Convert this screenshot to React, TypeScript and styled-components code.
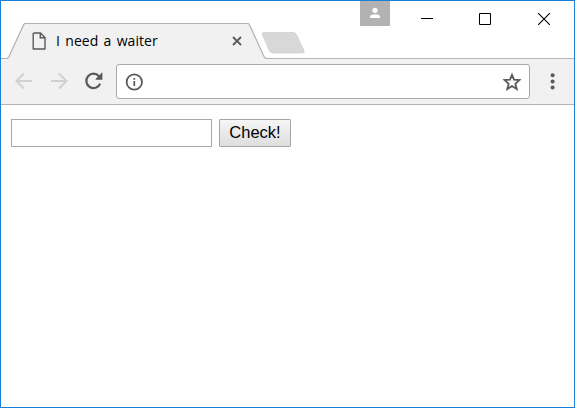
import React from "react";
import styled, { createGlobalStyle } from "styled-components";

const GlobalStyle = createGlobalStyle`
  * { box-sizing: border-box; }
  body { margin: 0; background: #fff; overflow: hidden; }
  svg { display: block; flex: none; }
`;

const Window = styled.div`
  width: 575px;
  height: 408px;
  display: flex;
  flex-direction: column;
  border: 1px solid #1a80d5;
  background: #fff;
`;

const TitleBar = styled.header`
  height: 58px;
  flex: none;
  display: flex;
  justify-content: space-between;
  border-bottom: 1px solid #b4b4b4;
`;

const TabStrip = styled.div`
  display: flex;
  align-items: flex-start;
  padding-top: 22px;
`;

const Tab = styled.div`
  width: 266px;
  height: 36px;
  display: grid;
  & > * { grid-area: 1 / 1; }
`;

const TabContent = styled.div`
  display: flex;
  align-items: center;
  height: 36px;
  padding: 0 24px 0 31px;
`;

const TabTitle = styled.span`
  flex: 1;
  margin-left: 9px;
  font: 14px/20px "Open Sans", "Noto Sans", sans-serif;
  letter-spacing: 0.05px;
  word-spacing: 1.6px;
  color: #000;
  white-space: nowrap;
`;

const TabClose = styled.button`
  padding: 0;
  border: 0;
  background: none;
`;

const NewTab = styled.button`
  padding: 0;
  margin: 8px 0 0 -6px;
  border: 0;
  background: none;
`;

const WindowControls = styled.div`
  display: flex;
  align-items: flex-start;
`;

const Profile = styled.div`
  width: 30px;
  height: 25px;
  margin-right: 8px;
  background: #b2b2b2;
`;

const WindowButton = styled.button<{ $width: number }>`
  width: ${(p) => p.$width}px;
  height: 36px;
  display: flex;
  justify-content: center;
  align-items: center;
  padding: 0;
  border: 0;
  background: none;
`;

const Toolbar = styled.nav`
  height: 46px;
  flex: none;
  display: flex;
  align-items: center;
  padding: 0 12px 0 13px;
  background: #f1f1f1;
  border-bottom: 1px solid #b4b4b4;
`;

const ToolButton = styled.button<{ $gap?: number }>`
  padding: 0 0 2px;
  margin: 0 ${(p) => p.$gap ?? 0}px 0 0;
  border: 0;
  background: none;
`;

const AddressBar = styled.div`
  width: 414px;
  height: 35px;
  display: flex;
  align-items: center;
  justify-content: space-between;
  margin-right: 13px;
  padding: 1px 7px 0 7px;
  border: 1px solid #a9a9a9;
  border-radius: 3px;
  background: #fff;
`;

const Page = styled.main`
  display: flex;
  gap: 7px;
  padding: 14px 10px;
`;

const TextField = styled.input`
  width: 201px;
  height: 28px;
  margin: 0;
  padding: 1px 4px;
  border: 1px solid #a9a9a9;
  border-radius: 0;
  outline: none;
  font: 16px "Liberation Sans", sans-serif;
`;

const CheckButton = styled.button`
  width: 72px;
  height: 28px;
  padding: 0 0 2px;
  border: 1px solid #a6a6a6;
  border-radius: 1px;
  background: linear-gradient(#f6f6f6, #dddddd);
  color: #000;
  font: 16.5px/24px "Liberation Sans", sans-serif;
`;

export default function App() {
  return (
    <>
      <GlobalStyle />
      <Window>
        <TitleBar>
          <TabStrip>
            <Tab>
              <svg width="266" height="36">
                <path d="M5.5 36L8 33.5L22.5 2Q23.2.5 25 .5H246Q248 .5 248.6 2L263 33.5L265.5 36Z" fill="#f1f1f1" />
                <path d="M0 35.5H5Q7 35.5 8 33.5L22.5 2Q23.2.5 25 .5H246Q248 .5 248.6 2L263 33.5Q264 35.5 266 35.5" fill="none" stroke="#b0b0b0" strokeWidth="1.2" />
              </svg>
              <TabContent>
                <svg width="15" height="20" viewBox="0 0 15 20" fill="none" stroke="#5a5a5a" strokeWidth="1.4">
                  <path d="M2.2 2H8.5L13 6.5V18H1.2V3Q1.2 2 2.2 2Z" strokeLinejoin="round" />
                  <path d="M8.3 2V6.8H13" />
                </svg>
                <TabTitle>I need a waiter</TabTitle>
                <TabClose aria-label="Close tab">
                  <svg width="12" height="12" stroke="#5a5a5a" strokeWidth="1.8">
                    <path d="M2 2L10 10M10 2L2 10" />
                  </svg>
                </TabClose>
              </TabContent>
            </Tab>
            <NewTab aria-label="New tab">
              <svg width="46" height="24">
                <path d="M3 1.5H32Q34.5 1.5 35.4 3.5L43 19.5Q44 22 41.5 22H12Q9.5 22 8.5 20L1.5 4Q.7 1.5 3 1.5Z" fill="#d8d8d8" stroke="#cfcfcf" strokeWidth=".8" />
              </svg>
            </NewTab>
          </TabStrip>
          <WindowControls>
            <Profile>
              <svg width="30" height="25" fill="#fff">
                <circle cx="15" cy="9.3" r="2.6" />
                <path d="M10 17V15.5C10 12.5 20 12.5 20 15.5V17Z" />
              </svg>
            </Profile>
            <WindowButton $width={58} aria-label="Minimize">
              <svg width="12" height="12"><path d="M0 5.5H12" stroke="#000" /></svg>
            </WindowButton>
            <WindowButton $width={58} aria-label="Maximize">
              <svg width="12" height="12"><path d="M.5 .5H11.5V11.5H.5Z" fill="none" stroke="#000" /></svg>
            </WindowButton>
            <WindowButton $width={60} aria-label="Close">
              <svg width="12" height="12"><path d="M0 0L12 12M12 0L0 12" stroke="#000" strokeWidth="1.1" /></svg>
            </WindowButton>
          </WindowControls>
        </TitleBar>
        <Toolbar>
          <ToolButton $gap={16} aria-label="Back">
            <svg width="19" height="18" fill="none" stroke="#d0d0d0" strokeWidth="2">
              <path d="M18 9H3M10 1.5L2.5 9L10 16.5" />
            </svg>
          </ToolButton>
          <ToolButton $gap={15} aria-label="Forward">
            <svg width="19" height="18" fill="none" stroke="#d0d0d0" strokeWidth="2">
              <path d="M2 9H17M10 1.5L17.5 9L10 16.5" />
            </svg>
          </ToolButton>
          <ToolButton $gap={13} aria-label="Reload">
            <svg width="20" height="20" fill="none">
              <path d="M16 5.2A7.2 7.2 0 1 0 17.2 12.6" stroke="#5a5a5a" strokeWidth="2.2" />
              <path d="M19.4 1.6V8.8H12.6V8L19 1.6Z" fill="#5a5a5a" />
            </svg>
          </ToolButton>
          <AddressBar>
            <svg width="20" height="20">
              <circle cx="10.3" cy="10" r="7.7" fill="none" stroke="#5a5a5a" strokeWidth="1.8" />
              <path d="M10.3 9V14M10.3 6V7.7" stroke="#5a5a5a" strokeWidth="1.7" />
            </svg>
            <svg width="20" height="20" fill="none" stroke="#5a5a5a" strokeWidth="1.8">
              <path d="M10 2.8L12 7.7L17.4 8.1L13.3 11.7L14.7 17.1L10 14.1L5.3 17.1L6.7 11.7L2.6 8.1L8 7.7Z" />
            </svg>
          </AddressBar>
          <ToolButton aria-label="Menu">
            <svg width="19" height="20" fill="#5a5a5a">
              <circle cx="9.6" cy="4.2" r="2" />
              <circle cx="9.6" cy="10.4" r="2" />
              <circle cx="9.6" cy="16.6" r="2" />
            </svg>
          </ToolButton>
        </Toolbar>
        <Page>
          <TextField aria-label="Text" />
          <CheckButton>Check!</CheckButton>
        </Page>
      </Window>
    </>
  );
}
